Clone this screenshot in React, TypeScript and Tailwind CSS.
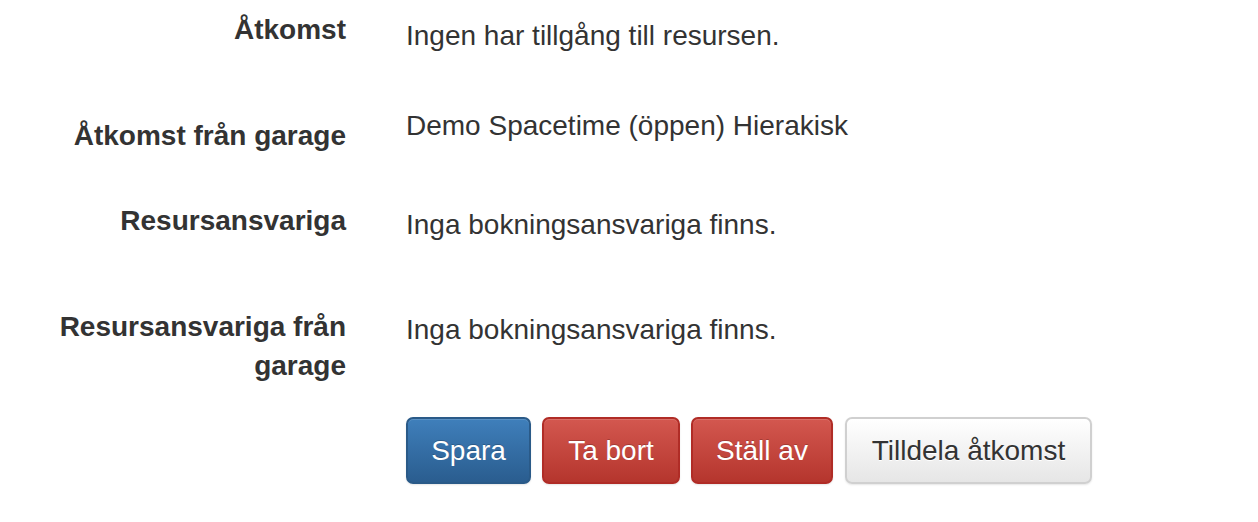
import React from "react";

const font = { fontFamily: '"Liberation Sans", Arial, Helvetica, sans-serif' };

type Row = {
  label: string;
  value: string;
  rowClass: string;
  labelClass: string;
  valueClass: string;
};

const rows: Row[] = [
  {
    label: "Åtkomst",
    value: "Ingen har tillgång till resursen.",
    rowClass: "h-[96px]",
    labelClass: "pt-[10px]",
    valueClass: "pt-[16px]",
  },
  {
    label: "Åtkomst från garage",
    value: "Demo Spacetime (öppen) Hierakisk",
    rowClass: "h-[94px]",
    labelClass: "pt-[20px]",
    valueClass: "pt-[10px]",
  },
  {
    label: "Resursansvariga",
    value: "Inga bokningsansvariga finns.",
    rowClass: "h-[106px]",
    labelClass: "pt-[11px]",
    valueClass: "pt-[15px]",
  },
  {
    label: "Resursansvariga från garage",
    value: "Inga bokningsansvariga finns.",
    rowClass: "h-[121px]",
    labelClass: "pt-[11px]",
    valueClass: "pt-[14px]",
  },
];

function Button({
  children,
  variant,
  className = "",
}: {
  children: React.ReactNode;
  variant: "primary" | "danger" | "default";
  className?: string;
}) {
  const styles = {
    primary:
      "bg-gradient-to-b from-[#3f7fbb] to-[#2a5d8f] border-[#2a5a88] text-white [text-shadow:0_-1px_0_rgba(0,0,0,0.2)]",
    danger:
      "bg-gradient-to-b from-[#d3574f] to-[#b5352d] border-[#b02c26] text-white [text-shadow:0_-1px_0_rgba(0,0,0,0.2)]",
    default:
      "bg-gradient-to-b from-white to-[#e6e6e6] border-[#d0d0d0] text-[#333] [text-shadow:0_1px_0_#fff]",
  };
  return (
    <button
      className={`h-[67px] rounded-[7px] border-2 text-[28px] leading-[40px] text-center shadow-[inset_0_1px_0_rgba(255,255,255,0.15),0_1px_2px_rgba(0,0,0,0.1)] ${styles[variant]} ${className}`}
    >
      {children}
    </button>
  );
}

export default function App() {
  return (
    <div className="w-[1258px] h-[522px] bg-white text-[#333] overflow-hidden" style={font}>
      {rows.map((r) => (
        <div key={r.label} className={`flex ${r.rowClass}`}>
          <div
            className={`w-[346px] pl-[30px] shrink-0 text-right font-bold text-[28px] leading-[39px] ${r.labelClass}`}
          >
            {r.label}
          </div>
          <div className={`ml-[60px] text-[28px] leading-[40px] ${r.valueClass}`}>
            {r.value}
          </div>
        </div>
      ))}
      <div className="flex ml-[406px]">
        <Button variant="primary" className="w-[125px]">Spara</Button>
        <Button variant="danger" className="w-[138px] ml-[11px]">Ta bort</Button>
        <Button variant="danger" className="w-[142px] ml-[11px]">Ställ av</Button>
        <Button variant="default" className="w-[247px] ml-[12px]">Tilldela åtkomst</Button>
      </div>
    </div>
  );
}
